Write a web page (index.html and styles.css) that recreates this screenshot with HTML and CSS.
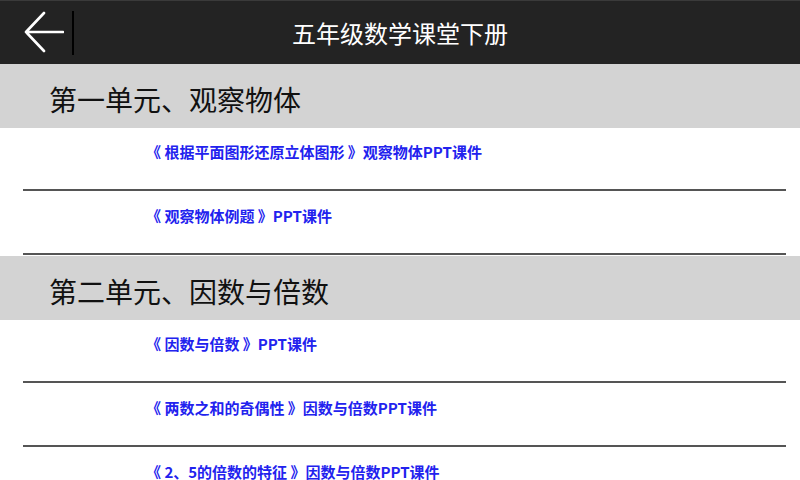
FILE: index.html
```html
<!DOCTYPE html>
<html lang="zh-CN">
<head>
    <meta charset="UTF-8">
    <meta name="viewport" content="width=device-width, initial-scale=1.0">
    <title>五年级数学课堂下册</title>
    <link rel="stylesheet" href="styles.css">
</head>
<body>
    <!-- 顶部栏 -->
    <div class="topbar">
        <div class="back">
            <svg width="40" height="42" viewBox="0 0 40 42">
                <path d="M20 2 L2 21 L20 40 M2 21 L39 21" fill="none" stroke="#fff" stroke-width="2.6" stroke-linecap="round" stroke-linejoin="round"/>
            </svg>
        </div>
        <div class="sep"></div>
        <div class="title">五年级数学课堂下册</div>
    </div>

    <!-- 列表 -->
    <div class="list">
        <div class="unit">第一单元、观察物体</div>
        <div class="item"><span>《 根据平面图形还原立体图形 》观察物体PPT课件</span></div>
        <div class="item"><span>《 观察物体例题 》PPT课件</span></div>

        <div class="unit">第二单元、因数与倍数</div>
        <div class="item"><span>《 因数与倍数 》PPT课件</span></div>
        <div class="item"><span>《 两数之和的奇偶性 》因数与倍数PPT课件</span></div>
        <div class="item"><span>《 2、5的倍数的特征 》因数与倍数PPT课件</span></div>
    </div>
</body>
</html>
```

FILE: styles.css
```css
body {
    margin: 0;
    padding: 0;
    width: 800px;
    height: 480px;
    overflow: hidden;
    background: #fff;
    font-family: "Noto Sans CJK SC", "Noto Sans", sans-serif;
}

.topbar {
    height: 64px;
    background: #232323;
    border-top: 1px solid #3a3a3a;
    box-sizing: border-box;
    display: flex;
    align-items: center;
    position: relative;
}

.back {
    width: 40px;
    height: 42px;
    margin-left: 24px;
    margin-top: -1px;
}

.back svg {
    display: block;
}

.sep {
    width: 2px;
    height: 44px;
    background: #000;
    margin-left: 8px;
}

.title {
    position: absolute;
    left: 0;
    right: 0;
    top: 0;
    line-height: 63px;
    text-align: center;
    color: #fff;
    font-size: 24px;
    pointer-events: none;
}

.unit {
    height: 64px;
    background: #d3d3d3;
    padding-left: 49px;
    font-size: 28px;
    line-height: 70px;
    color: #111;
}

.item {
    height: 64px;
    box-sizing: border-box;
    padding-left: 146px;
    padding-top: 11px;
    position: relative;
}

.item span {
    color: #2222ee;
    font-size: 15px;
    font-weight: bold;
    line-height: 24px;
}

.item::after {
    content: "";
    position: absolute;
    left: 23px;
    right: 14px;
    bottom: 1px;
    height: 2px;
    background: #555;
}
```
